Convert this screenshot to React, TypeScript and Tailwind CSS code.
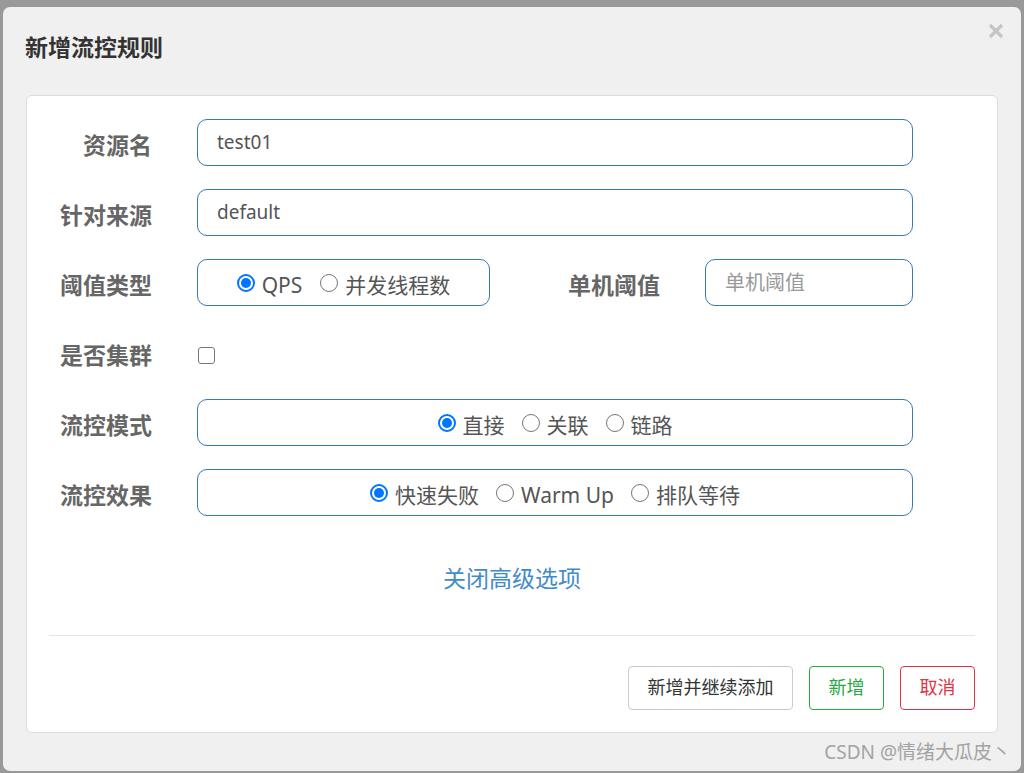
import React from 'react';

const font = { fontFamily: '"Noto Sans", "Noto Sans CJK SC", sans-serif' };

function Radio({ checked, label }: { checked?: boolean; label: string }) {
  return (
    <label className="flex items-center gap-[7px]">
      {checked ? (
        <span className="flex h-[18px] w-[18px] items-center justify-center rounded-full border-2 border-[#0075ff] bg-white">
          <span className="h-[10px] w-[10px] rounded-full bg-[#0075ff]" />
        </span>
      ) : (
        <span className="h-[18px] w-[18px] rounded-full border-[1.5px] border-[#767676] bg-white" />
      )}
      <span className="translate-y-[3px] text-[21px] text-[#555]">{label}</span>
    </label>
  );
}

function Label({ children }: { children: React.ReactNode }) {
  return (
    <div className="w-[125px] shrink-0 translate-y-[3px] text-right text-[23px] font-bold text-[#666]">
      {children}
    </div>
  );
}

const boxCls = 'h-[47px] rounded-[10px] border border-[#337ab7] bg-white';

export default function App() {
  return (
    <div className="h-[773px] w-[1024px] overflow-hidden bg-[#999] pl-[3px] pt-[7px]" style={font}>
      <div className="relative h-[764px] w-[1018px] rounded-[7px] bg-[#f0f0f0]">
        <div className="flex h-[88px] items-start justify-between">
          <h1 className="pl-[22px] pt-[23px] text-[23px] font-bold text-[#333]">新增流控规则</h1>
          <svg className="mr-[17px] mt-[16px]" width="16" height="16" viewBox="0 0 16 16">
            <path d="M2 2 L14 14 M14 2 L2 14" stroke="#c4c4c4" strokeWidth="3.2" strokeLinecap="butt" />
          </svg>
        </div>

        <div className="ml-[23px] flex h-[638px] w-[972px] flex-col rounded-[6px] border border-[#dcdcdc] bg-white pt-[23px]">
          <div className="flex flex-col gap-[23px]">
            <div className="flex items-center">
              <Label>资源名</Label>
              <div className={`ml-[45px] flex w-[716px] items-center px-[19px] text-[19px] text-[#555] ${boxCls}`}>test01</div>
            </div>
            <div className="flex items-center">
              <Label>针对来源</Label>
              <div className={`ml-[45px] flex w-[716px] items-center px-[19px] text-[19px] text-[#555] ${boxCls}`}>default</div>
            </div>
            <div className="flex items-center">
              <Label>阈值类型</Label>
              <div className={`ml-[45px] flex w-[293px] items-center justify-center gap-[18px] ${boxCls}`}>
                <Radio checked label="QPS" />
                <Radio label="并发线程数" />
              </div>
              <div className="w-[170px] shrink-0 translate-y-[3px] text-right text-[23px] font-bold text-[#666]">单机阈值</div>
              <div className={`ml-[45px] flex w-[208px] items-center px-[19px] text-[20px] text-[#999] ${boxCls}`}>单机阈值</div>
            </div>
            <div className="flex h-[47px] items-center">
              <Label>是否集群</Label>
              <div className="ml-[46px] mt-[6px] h-[17px] w-[17px] rounded-[3px] border-[1.5px] border-[#767676] bg-white" />
            </div>
            <div className="flex items-center">
              <Label>流控模式</Label>
              <div className={`ml-[45px] flex w-[716px] items-center justify-center gap-[17px] ${boxCls}`}>
                <Radio checked label="直接" />
                <Radio label="关联" />
                <Radio label="链路" />
              </div>
            </div>
            <div className="flex items-center">
              <Label>流控效果</Label>
              <div className={`ml-[45px] flex w-[716px] items-center justify-center gap-[17px] ${boxCls}`}>
                <Radio checked label="快速失败" />
                <Radio label="Warm Up" />
                <Radio label="排队等待" />
              </div>
            </div>
          </div>

          <div className="mt-[45px] text-center text-[23px] text-[#428bca]">关闭高级选项</div>

          <div className="mx-[22px] mt-[39px] border-t border-[#e5e5e5]" />

          <div className="mr-[22px] mt-[30px] flex justify-end gap-[16px]">
            <button className="h-[44px] w-[165px] rounded-[4px] border border-[#ccc] bg-white text-[18px] text-[#333]">新增并继续添加</button>
            <button className="h-[44px] w-[75px] rounded-[4px] border border-[#28a745] bg-white text-[18px] text-[#28a745]">新增</button>
            <button className="h-[44px] w-[75px] rounded-[4px] border border-[#dc3545] bg-white text-[18px] text-[#dc3545]">取消</button>
          </div>
        </div>

        <div className="absolute bottom-[5px] right-[10px] text-[19px] text-[#a3a3a3]">CSDN @情绪大瓜皮丶</div>
      </div>
    </div>
  );
}
